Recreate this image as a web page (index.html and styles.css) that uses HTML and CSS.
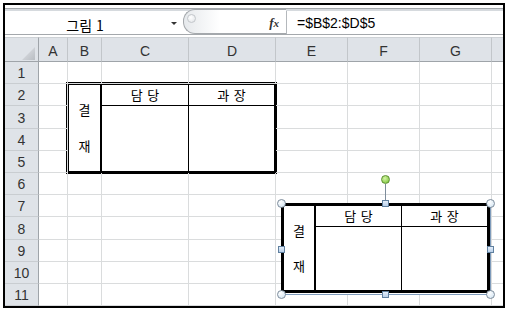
FILE: index.html
```html
<!DOCTYPE html>
<html lang="ko">
<head>
    <meta charset="UTF-8">
    <title>결재 표</title>
    <link rel="stylesheet" href="styles.css">
</head>
<body>

<div class="frame">
    <!-- name box + formula bar -->
    <div class="topbar">
        <div class="bar">
            <div class="namebox">
                <span class="name">그림 1</span>
                <span class="arrow"></span>
            </div>
            <div class="fxbtn">
                <span class="dimple"></span>
                <span class="fx"><i>f</i><i class="x">x</i></span>
            </div>
            <div class="formula">=$B$2:$D$5</div>
        </div>
    </div>

    <!-- worksheet -->
    <div class="sheet">
        <div class="hd corner"><span class="tri"></span></div>
        <div class="hd">A</div>
        <div class="hd">B</div>
        <div class="hd">C</div>
        <div class="hd">D</div>
        <div class="hd">E</div>
        <div class="hd">F</div>
        <div class="hd">G</div>
        <div class="hd last"></div>

        <!-- merged B2:D5 -->
        <div class="approval on-sheet">
            <div class="ap-side"><span>결</span><span>재</span></div>
            <div class="ap-head first">담 당</div>
            <div class="ap-head">과 장</div>
            <div class="ap-body first"></div>
            <div class="ap-body"></div>
        </div>

        <div class="rn">1</div>
        <div class="c"></div><div class="c"></div><div class="c"></div><div class="c"></div><div class="c"></div><div class="c"></div><div class="c"></div><div class="c last"></div>

        <div class="rn">2</div>
        <div class="c"></div><div class="c"></div><div class="c"></div><div class="c"></div><div class="c last"></div>

        <div class="rn">3</div>
        <div class="c"></div><div class="c"></div><div class="c"></div><div class="c"></div><div class="c last"></div>

        <div class="rn">4</div>
        <div class="c"></div><div class="c"></div><div class="c"></div><div class="c"></div><div class="c last"></div>

        <div class="rn">5</div>
        <div class="c"></div><div class="c"></div><div class="c"></div><div class="c"></div><div class="c last"></div>

        <div class="rn">6</div>
        <div class="c"></div><div class="c"></div><div class="c"></div><div class="c"></div><div class="c"></div><div class="c"></div><div class="c"></div><div class="c last"></div>

        <div class="rn">7</div>
        <div class="c"></div><div class="c"></div><div class="c"></div><div class="c"></div><div class="c"></div><div class="c"></div><div class="c"></div><div class="c last"></div>

        <div class="rn">8</div>
        <div class="c"></div><div class="c"></div><div class="c"></div><div class="c"></div><div class="c"></div><div class="c"></div><div class="c"></div><div class="c last"></div>

        <div class="rn">9</div>
        <div class="c"></div><div class="c"></div><div class="c"></div><div class="c"></div><div class="c"></div><div class="c"></div><div class="c"></div><div class="c last"></div>

        <div class="rn">10</div>
        <div class="c"></div><div class="c"></div><div class="c"></div><div class="c"></div><div class="c"></div><div class="c"></div><div class="c"></div><div class="c last"></div>

        <div class="rn">11</div>
        <div class="c"></div><div class="c"></div><div class="c"></div><div class="c"></div><div class="c"></div><div class="c"></div><div class="c"></div><div class="c last"></div>

        <!-- pasted picture, selected -->
        <div class="pic">
            <div class="approval small">
                <div class="ap-side"><span>결</span><span>재</span></div>
                <div class="ap-head first">담 당</div>
                <div class="ap-head">과 장</div>
                <div class="ap-body first"></div>
                <div class="ap-body"></div>
            </div>
            <span class="rot-line"></span>
            <span class="rot"></span>
            <span class="h-round tl"></span>
            <span class="h-round tr"></span>
            <span class="h-round bl"></span>
            <span class="h-round br"></span>
            <span class="h-sq tm"></span>
            <span class="h-sq bm"></span>
            <span class="h-sq ml"></span>
            <span class="h-sq mr"></span>
        </div>
    </div>
</div>

</body>
</html>
```

FILE: styles.css
```css
body {
    margin: 0;
    background: #fff;
    font-family: "Liberation Sans", Arial, sans-serif;
    color: #000;
}
.frame {
    margin: 3px;
    width: 498px;
    border: 2px solid #000;
}

/* formula bar */
.topbar {
    height: 32px;
    box-sizing: border-box;
    padding: 3px 0 2px;
}
.bar {
    display: flex;
    height: 27px;
    box-sizing: border-box;
    border-top: 1px solid #a4a8ac;
    border-bottom: 1px solid #a4a8ac;
    padding-top: 2px;
    background: linear-gradient(#d6dade 0 2px, #fff 2px);
}
.namebox {
    width: 178px;
    display: flex;
    align-items: center;
}
.name {
    width: 160px;
    text-align: center;
    font: 14px "Noto Sans CJK KR", sans-serif;
    padding-top: 4px;
}
.arrow {
    margin-left: 6px;
    margin-top: 2px;
    border-left: 3px solid transparent;
    border-right: 3px solid transparent;
    border-top: 3px solid #333;
}
.fxbtn {
    width: 92px;
    margin-top: -2px;
    border: 1px solid #a4a8ac;
    border-right: none;
    border-radius: 12px 0 0 12px;
    background: linear-gradient(90deg, #e6e9ec, #fff 35%);
    display: flex;
    align-items: center;
    justify-content: space-between;
    padding: 0 7px 0 3px;
}
.dimple {
    width: 7px;
    height: 7px;
    border-radius: 50%;
    border: 1px solid #c3c7cb;
    background: radial-gradient(circle at 40% 35%, #fff, #dfe2e6);
    margin-top: -6px;
}
.fx {
    font: bold 13px "Liberation Serif", serif;
    color: #333;
    padding-top: 2px;
}
.fx .x {
    font-size: 11px;
}
.formula {
    flex: 1;
    border-left: 1px solid #b4b8bc;
    padding: 4px 0 0 10px;
    font-size: 14px;
}

/* worksheet grid */
.sheet {
    position: relative;
    display: grid;
    grid-template-columns: 34px 29px 34px 87px 87px 72px 72px 72px 11px;
    grid-template-rows: 25px 22px 22px 23px 22px 22px 22px 22px 23px 22px 22px 22px;
}
.hd {
    background: #dfe3e8;
    border-top: 1px solid #cdd1d5;
    border-bottom: 1px solid #9fa4a9;
    border-right: 1px solid #c2c6ca;
    box-sizing: border-box;
    display: flex;
    align-items: center;
    justify-content: center;
    padding-top: 2px;
    font-size: 14px;
    color: #333;
}
.hd.corner {
    border-right-color: #9fa4a9;
    align-items: flex-end;
    justify-content: flex-end;
    padding: 0 3px 1px 0;
}
.tri {
    width: 13px;
    height: 13px;
    background: linear-gradient(135deg, #e2e5e9, #b9bdc2);
    clip-path: polygon(100% 0, 100% 100%, 0 100%);
}
.hd.last {
    border-right: none;
}
.rn {
    background: #dfe3e8;
    border-right: 1px solid #9fa4a9;
    border-bottom: 1px solid #c9cdd1;
    box-sizing: border-box;
    display: flex;
    align-items: center;
    justify-content: center;
    padding-top: 1px;
    font-size: 14px;
    color: #333;
}
.c {
    border-right: 1px solid #dadcdd;
    border-bottom: 1px solid #dadcdd;
    box-sizing: border-box;
}
.c.last {
    border-right: none;
}

/* 결재 table */
.approval {
    display: grid;
    grid-template-columns: 33px 87px 1fr;
    grid-template-rows: 21px 1fr;
    border: 3px solid #000;
    background: #fff;
    box-sizing: border-box;
    font: 13px/18px "Noto Sans CJK KR", sans-serif;
    word-spacing: 1px;
}
.approval.on-sheet {
    grid-column: 3 / 6;
    grid-row: 3 / 7;
    margin: -2px -1px -1px -2px;
}
.ap-side {
    grid-row: 1 / 3;
    border-right: 2px solid #000;
    display: flex;
    flex-direction: column;
    align-items: center;
    justify-content: center;
    gap: 18px;
}
.ap-head {
    border-bottom: 1px solid #000;
    display: flex;
    align-items: center;
    justify-content: center;
}
.ap-head.first,
.ap-body.first {
    border-right: 1px solid #000;
}

/* selected picture */
.pic {
    position: absolute;
    left: 276px;
    top: 166px;
    width: 208px;
    height: 90px;
    border: 1px solid #7f9cbc;
    background: #fff;
}
.approval.small {
    width: 209px;
    height: 90px;
    margin: -1px 0 0 -1px;
    grid-template-columns: 32px 86px 1fr;
}
.approval.small .ap-side {
    gap: 17px;
}
.h-round {
    position: absolute;
    width: 7px;
    height: 7px;
    border-radius: 50%;
    border: 1px solid #7d8c9b;
    background: radial-gradient(circle at 35% 30%, #fff, #cfe2f1);
}
.h-round.tl { left: -5px; top: -5px; }
.h-round.tr { right: -5px; top: -5px; }
.h-round.bl { left: -5px; bottom: -5px; }
.h-round.br { right: -5px; bottom: -5px; }
.h-sq {
    position: absolute;
    width: 5px;
    height: 5px;
    border: 1px solid #60809f;
    background: linear-gradient(#e4eefa, #b9d0ea);
}
.h-sq.tm { left: 50%; margin-left: -4px; top: -4px; }
.h-sq.bm { left: 50%; margin-left: -4px; bottom: -4px; }
.h-sq.ml { left: -4px; top: 50%; margin-top: -3px; }
.h-sq.mr { right: -4px; top: 50%; margin-top: -3px; }
.rot-line {
    position: absolute;
    left: 50%;
    margin-left: -1px;
    top: -20px;
    width: 1px;
    height: 16px;
    background: #7d8c9b;
}
.rot {
    position: absolute;
    left: 50%;
    margin-left: -5px;
    top: -29px;
    width: 7px;
    height: 7px;
    border-radius: 50%;
    border: 1px solid #5e8f33;
    background: radial-gradient(circle at 40% 35%, #d6f5a6, #6fbf2c);
}
```
